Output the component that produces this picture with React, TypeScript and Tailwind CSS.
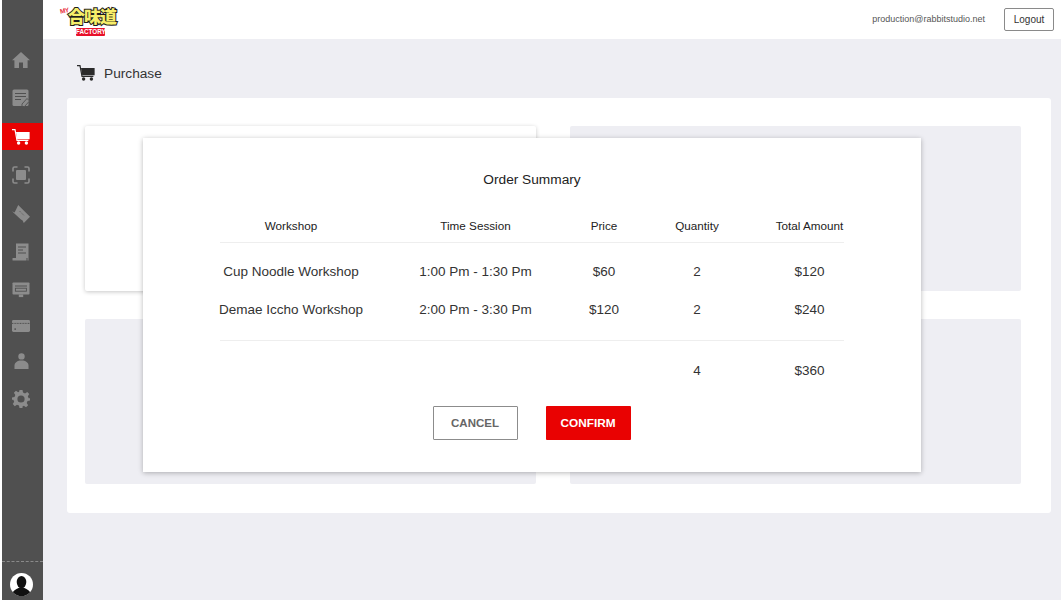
import React from 'react';

const IconHome = () => (
  <svg viewBox="0 0 18 16" className="w-[18px] h-4" fill="currentColor">
    <path d="M9 0 L18 8.2 L15.6 8.2 L15.6 16 L11 16 L11 10.5 L7 10.5 L7 16 L2.4 16 L2.4 8.2 L0 8.2 Z" />
  </svg>
);

const IconDoc = () => (
  <svg viewBox="0 0 18 18" className="w-[18px] h-[18px] -mt-[1px]">
    <rect x="0.5" y="0.5" width="16" height="16.5" rx="1.5" fill="currentColor" />
    <path d="M3 4.5 H14 M3 7.5 H14 M3 10.5 H9" stroke="#505050" strokeWidth="1.2" />
    <path d="M10 15 L15 9.5 L17.5 12 L12.5 17.5 L10 17.5 Z" fill="currentColor" stroke="#505050" strokeWidth="0.9" />
  </svg>
);

const IconCart = () => (
  <svg viewBox="0 0 18 16" className="w-[18px] h-4" fill="currentColor">
    <path d="M0 0.6 H3 L5 11.4 H16.4" fill="none" stroke="currentColor" strokeWidth="1.2" />
    <path d="M4 3 H17.6 V10.2 H5.2 Z" />
    <circle cx="6.6" cy="14" r="1.7" />
    <circle cx="14.4" cy="14" r="1.7" />
  </svg>
);

const IconScan = () => (
  <svg viewBox="0 0 18 18" className="w-[18px] h-[18px]" fill="none" stroke="currentColor" strokeWidth="1.6">
    <path d="M1 5.5 V2.5 A1.5 1.5 0 0 1 2.5 1 H5.5 M12.5 1 H15.5 A1.5 1.5 0 0 1 17 2.5 V5.5 M17 12.5 V15.5 A1.5 1.5 0 0 1 15.5 17 H12.5 M5.5 17 H2.5 A1.5 1.5 0 0 1 1 15.5 V12.5" />
    <rect x="4" y="4" width="10" height="10" rx="1" fill="currentColor" stroke="none" />
  </svg>
);

const IconTicket = () => (
  <svg viewBox="0 0 18 18" className="w-[18px] h-[18px]">
    <path d="M6.2 0 L18 11.8 L11.8 18 L10.6 15.4 L8.6 14.2 L0 6.2 L2.6 7.4 L4.2 4.2 Z" fill="currentColor" />
    <path d="M7.5 6 L12 10.5" stroke="#505050" strokeWidth="0.8" strokeDasharray="1.2 1.2" />
  </svg>
);

const IconReceipt = () => (
  <svg viewBox="0 0 18 18" className="w-[18px] h-[18px]">
    <path d="M4 0.5 H16.5 V17.5 H15.5 V15 H4 Z" fill="currentColor" />
    <path d="M6 4 H14 M6 7 H11 M6 10 H14" stroke="#505050" strokeWidth="1.1" />
    <rect x="0.5" y="15" width="14" height="2.5" rx="0.5" fill="currentColor" />
  </svg>
);

const IconMonitor = () => (
  <svg viewBox="0 0 18 16" className="w-[18px] h-4">
    <rect x="0.5" y="0.5" width="17" height="12" rx="0.8" fill="currentColor" />
    <rect x="6.8" y="12.5" width="4.4" height="2.6" fill="currentColor" />
    <path d="M3 4 H15" stroke="#505050" strokeWidth="1" />
    <rect x="3.4" y="6.2" width="11" height="3" fill="none" stroke="#505050" strokeWidth="0.9" />
  </svg>
);

const IconCard = () => (
  <svg viewBox="0 0 18 12" className="w-[18px] h-3">
    <rect x="0" y="0" width="18" height="12" rx="1.4" fill="currentColor" />
    <path d="M0 3.4 H18" stroke="#505050" strokeWidth="1" strokeDasharray="1 0.6" />
    <rect x="2.4" y="8.4" width="1.6" height="1.4" fill="#505050" />
  </svg>
);

const IconUser = () => (
  <svg viewBox="0 0 16 17" className="w-[15px] h-4" fill="currentColor">
    <circle cx="8" cy="3.6" r="3.4" />
    <path d="M0.5 17 V13.6 C0.5 10.2 3.6 8 8 8 C12.4 8 15.5 10.2 15.5 13.6 V17 Z" />
  </svg>
);

const IconGear = () => (
  <svg viewBox="0 0 24 24" className="w-[18px] h-[18px]" fill="currentColor">
    <path
      fillRule="evenodd"
      d="M10 0 H14 L14.7 3.4 L17.4 4.5 L20.3 2.6 L23 5.4 L21.1 8.3 L22.2 11 L24 11 V14 L20.7 14.7 L19.6 17.4 L21.5 20.3 L18.7 23 L15.8 21.1 L14 21.9 L14 24 H10 L9.3 20.7 L6.6 19.6 L3.7 21.5 L1 18.7 L2.9 15.8 L1.8 13.1 L0 13 V10 L3.3 9.3 L4.4 6.6 L2.5 3.7 L5.3 1 L8.2 2.9 L9.5 2.2 Z M12 7.2 A4.8 4.8 0 1 0 12 16.8 A4.8 4.8 0 1 0 12 7.2 Z"
    />
  </svg>
);

const navItems = [
  { icon: <IconHome />, active: false, spacing: 'mb-[12px]' },
  { icon: <IconDoc />, active: false, spacing: 'mb-[11px]' },
  { icon: <IconCart />, active: true, spacing: 'mb-[11px]' },
  { icon: <IconScan />, active: false, spacing: 'mb-[12px]' },
  { icon: <IconTicket />, active: false, spacing: 'mb-[11px]' },
  { icon: <IconReceipt />, active: false, spacing: 'mb-[11px]' },
  { icon: <IconMonitor />, active: false, spacing: 'mb-[9px]' },
  { icon: <IconCard />, active: false, spacing: 'mb-2' },
  { icon: <IconUser />, active: false, spacing: 'mb-[11px]' },
  { icon: <IconGear />, active: false, spacing: '' },
];

const orderRows = [
  { workshop: 'Cup Noodle Workshop', time: '1:00 Pm - 1:30 Pm', price: '$60', qty: '2', total: '$120' },
  { workshop: 'Demae Iccho Workshop', time: '2:00 Pm - 3:30 Pm', price: '$120', qty: '2', total: '$240' },
];

const tableCols = 'grid grid-cols-[142px_227px_30px_156px_69px] justify-items-center text-center whitespace-nowrap';

const Logo = () => (
  <div className="relative mb-[2px] ml-[16px] h-[36px] w-[60px]">
    <span className="absolute left-[9px] top-[3px] text-[17px] font-black leading-[24px] tracking-[-1px] text-[#f6ee6a] [-webkit-text-stroke:2px_#1c1c1c] [font-family:'Noto_Sans_CJK_JP',sans-serif] [paint-order:stroke_fill]">
      合味道
    </span>
    <span className="absolute left-[1px] top-[6px] -rotate-12 text-[6.5px] font-bold leading-[8px] tracking-[-0.5px] text-[#e8323c] [-webkit-text-stroke:1.5px_#fff] [font-family:'Liberation_Sans',sans-serif] [paint-order:stroke_fill]">
      MY
    </span>
    <span className="absolute left-[17px] top-[27px] w-[29px] text-center text-[6.3px] font-bold leading-[8px] text-white bg-[#e8102a] rounded-[1px] [font-family:'Liberation_Sans',sans-serif]">
      FACTORY
    </span>
  </div>
);

export default function App() {
  return (
    <div className="relative flex h-[600px] w-[1061px] overflow-hidden bg-white text-[#333] [font-family:'Liberation_Sans',Arial,sans-serif]">
      {/* sidebar */}
      <aside className="ml-[2px] flex h-full w-[41px] flex-col bg-[#505050] pt-[46px] text-[#8c8c8c]">
        {navItems.map((item, i) => (
          <div
            key={i}
            className={`flex h-[27px] items-center justify-center pr-[3px] ${item.spacing} ${item.active ? 'bg-[#e90202] text-white' : ''}`}
          >
            {item.icon}
          </div>
        ))}
        <div className="mt-auto flex h-[39px] items-center justify-center border-t border-dashed border-[#8a8a8a] pr-[3px]">
          <svg viewBox="0 0 24 24" className="mt-[7px] h-[23px] w-[23px]">
            <circle cx="12" cy="12" r="12" fill="#fff" />
            <clipPath id="avatar-clip">
              <circle cx="12" cy="12" r="12" />
            </clipPath>
            <g clipPath="url(#avatar-clip)" fill="#111">
              <ellipse cx="12" cy="9.5" rx="5" ry="6.5" />
              <path d="M2 24 C2 18 7 17 9.5 15 H14.5 C17 17 22 18 22 24 Z" />
            </g>
          </svg>
        </div>
      </aside>

      {/* main column */}
      <div className="flex flex-1 flex-col bg-[#eeeef3]">
        <header className="flex h-[39px] items-center justify-between bg-white pr-[7px]">
          <Logo />
          <div className="flex items-center">
            <span className="mr-[19px] text-[9px] text-[#555]">production@rabbitstudio.net</span>
            <button className="h-[23px] w-[50px] rounded-[2px] border border-[#8a8a8a] bg-white text-[10px] text-[#333]">
              Logout
            </button>
          </div>
        </header>

        <div className="flex h-[59px] items-center pl-[34px] pt-[10px]">
          <span className="mt-[-1px] text-[#2a2a2a]">
            <IconCart />
          </span>
          <h1 className="ml-[9px] mt-[1px] text-[13.7px] text-[#333]">Purchase</h1>
        </div>

        <section className="ml-[24px] mr-[10px] grid h-[415px] grid-cols-2 grid-rows-[165px_165px] gap-x-[34px] gap-y-[28px] rounded-[3px] bg-white pb-[29px] pl-[18px] pr-[30px] pt-[28px]">
          <div className="rounded-[2px] bg-white shadow-[0_1px_4px_rgba(0,0,0,0.22)]" />
          <div className="rounded-[2px] bg-[#eeeef3]" />
          <div className="rounded-[2px] bg-[#eeeef3]" />
          <div className="rounded-[2px] bg-[#eeeef3]" />
        </section>
      </div>

      {/* order summary dialog */}
      <div className="absolute left-[143px] top-[138px] h-[334px] w-[778px] bg-white pl-[77px] shadow-[0_1px_5px_rgba(0,0,0,0.28)]">
        <h2 className="w-[624px] pt-[34px] text-center text-[13.7px] leading-4 text-[#222]">Order Summary</h2>

        <div className={`${tableCols} mt-[31px] w-[624px] border-b border-[#eeeeee] pb-[9px] text-[11.7px] leading-[14px] text-[#222]`}>
          <span>Workshop</span>
          <span>Time Session</span>
          <span>Price</span>
          <span>Quantity</span>
          <span>Total Amount</span>
        </div>

        <div className="w-[624px] border-b border-[#eeeeee] pb-[22px] pt-[21px] text-[13.5px] leading-4 text-[#333]">
          {orderRows.map((row, i) => (
            <div key={row.workshop} className={`${tableCols} ${i > 0 ? 'mt-[22px]' : ''}`}>
              <span>{row.workshop}</span>
              <span>{row.time}</span>
              <span>{row.price}</span>
              <span>{row.qty}</span>
              <span>{row.total}</span>
            </div>
          ))}
        </div>

        <div className={`${tableCols} mt-[22px] w-[624px] text-[13.5px] leading-4 text-[#333]`}>
          <span />
          <span />
          <span />
          <span>4</span>
          <span>$360</span>
        </div>

        <div className="mt-[27px] flex w-[624px] justify-center gap-[28px]">
          <button className="ml-[-1px] h-[34px] w-[85px] rounded-[1px] border border-[#8c8c8c] bg-white pt-[1px] text-[11.5px] font-bold text-[#666]">
            CANCEL
          </button>
          <button className="h-[34px] w-[85px] rounded-[1px] bg-[#e90202] pt-[1px] text-[11.8px] font-bold text-white">
            CONFIRM
          </button>
        </div>
      </div>
    </div>
  );
}
